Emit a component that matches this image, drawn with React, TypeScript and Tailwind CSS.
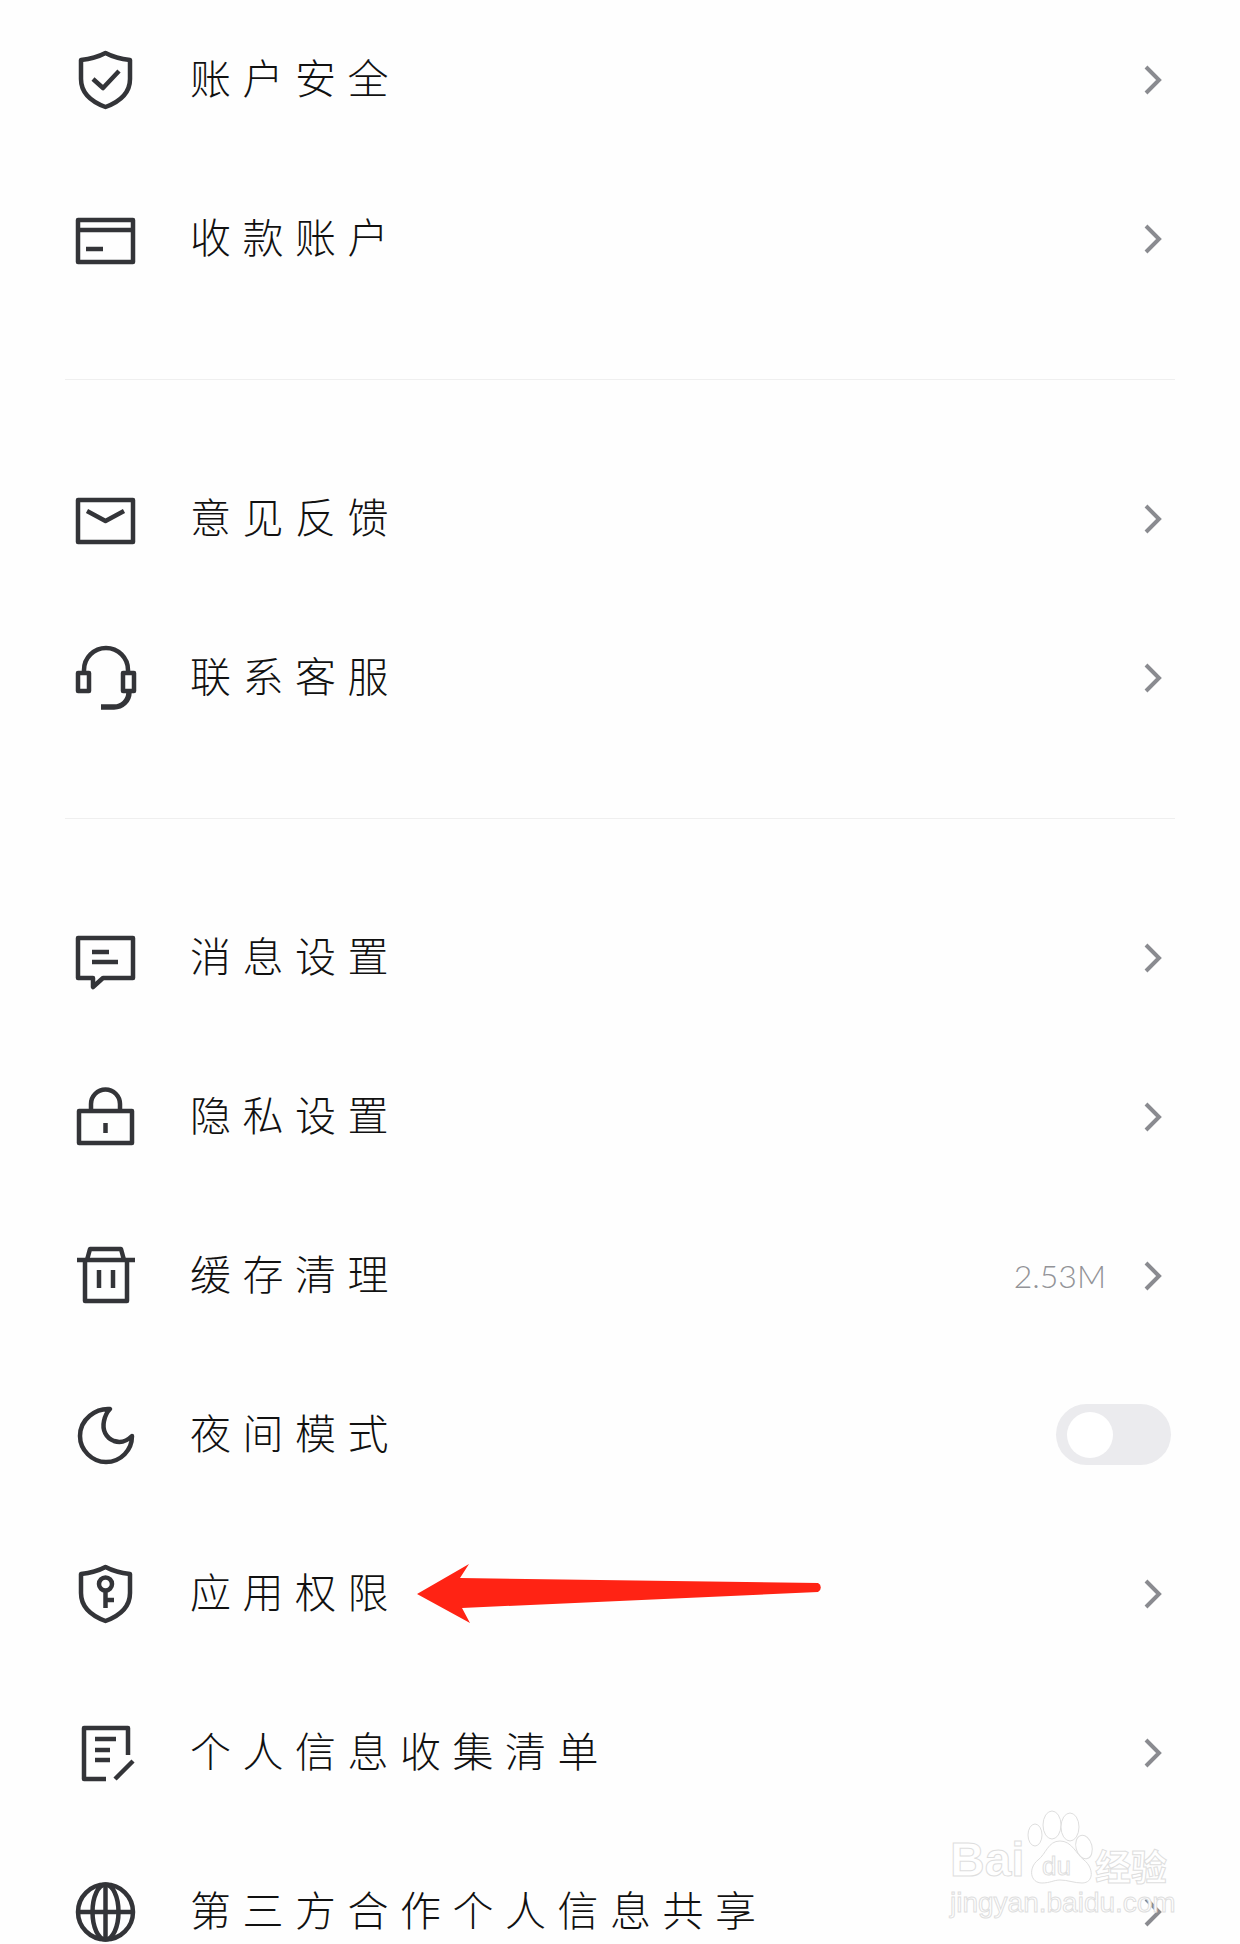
import React from "react";

const iconClass =
  "w-[60px] h-[60px] shrink-0 overflow-visible fill-none stroke-[#333438] stroke-[4.5] [stroke-linejoin:round]";

const Icon = ({ children }: { children: React.ReactNode }) => (
  <svg viewBox="0 0 60 60" className={iconClass}>
    {children}
  </svg>
);

const shield =
  "M29.5 3 C37 7 45 9 54 10 V29 C54 43 43 52 29.5 57 C16 52 5 43 5 29 V10 C14 9 22 7 29.5 3 Z";

const ShieldCheck = () => (
  <Icon>
    <path d={shield} />
    <path d="M17 29 L27 38 L43 21" />
  </Icon>
);
const Card = () => (
  <Icon>
    <rect x="2" y="11" width="55" height="42" />
    <path d="M2 21 H57" />
    <path d="M10 40 H27" />
  </Icon>
);
const Mail = () => (
  <Icon>
    <rect x="2" y="11" width="55" height="42" />
    <path d="M11 22 L29.5 32 L48 22" />
  </Icon>
);
const Headset = () => (
  <Icon>
    <path d="M8 23 V22 A21.5 21.5 0 0 1 52 22 V23" />
    <rect x="2" y="25" width="11" height="18" />
    <rect x="47" y="25" width="11" height="18" />
    <path d="M53 44 C53 53 46 59 38 59 H25" strokeWidth="5.5" />
  </Icon>
);
const Message = () => (
  <Icon>
    <path d="M2 10 H57 V50 H27 L17 59 V50 H2 Z" />
    <path d="M16 24 H33" />
    <path d="M16 34 H42" />
  </Icon>
);
const Lock = () => (
  <Icon>
    <rect x="3" y="24" width="53" height="32" />
    <path d="M15 24 V17 A14.5 14.5 0 0 1 44 17 V24" />
    <path d="M29.5 36 V46" />
  </Icon>
);
const Trash = () => (
  <Icon>
    <path d="M1 14 H59" />
    <path d="M11 14 L14 3 H45 L48 14" />
    <path d="M9 14 V55 H51 V14" />
    <path d="M23 24 V42" />
    <path d="M37 24 V42" />
  </Icon>
);
const Moon = () => (
  <Icon>
    <path d="M34 4 C20 3 4 14 4 31 C4 45 16 57 30 57 C45 57 56 45 56 31 C50 37 44 38 38 36 C30 33 26 25 28 16 C29 11 31 7 34 4 Z" />
  </Icon>
);
const ShieldKey = () => (
  <Icon>
    <path d={shield} />
    <circle cx="29.5" cy="20" r="6.5" />
    <path d="M29.5 26 V44" />
    <path d="M29.5 36 H38" />
  </Icon>
);
const Doc = () => (
  <Icon>
    <path d="M52 32 V5 H8 V56 H30" />
    <path d="M19 16 H40" />
    <path d="M19 27 H34" />
    <path d="M19 37 H34" />
    <path d="M39 56 L57 38" />
  </Icon>
);
const Globe = () => (
  <Icon>
    <circle cx="29.5" cy="30" r="27.5" />
    <ellipse cx="29.5" cy="30" rx="13" ry="27.5" />
    <path d="M29.5 3 V57" />
    <path d="M2 30 H57" />
  </Icon>
);

const Chevron = () => (
  <svg
    viewBox="0 0 16 28"
    className="w-4 h-7 shrink-0 overflow-visible fill-none stroke-[#8a8b90] stroke-[4]"
  >
    <path d="M1 1 L14 14 L1 27" />
  </svg>
);

const Toggle = () => (
  <div className="flex items-center w-[115px] h-[61px] -mr-2.5 pl-[11px] rounded-full bg-[#ebebee]">
    <div className="w-[46px] h-[46px] rounded-full bg-white" />
  </div>
);

type Item = {
  icon: React.ReactNode;
  label: string;
  value?: string;
  toggle?: boolean;
};

const Row = ({ icon, label, value, toggle }: Item) => (
  <div className="flex items-center h-[159px] pl-[76px] pr-[79px]">
    {icon}
    <span className="ml-[54px] pb-[5px] text-[41px] font-light tracking-[11.5px] text-[#111111] font-['Noto_Sans_CJK_SC',sans-serif]">
      {label}
    </span>
    <div className="ml-auto flex items-center">
      {value && (
        <span className="mr-[39px] text-[32px] font-light text-[#929397] font-['Lato',sans-serif]">
          {value}
        </span>
      )}
      {toggle ? <Toggle /> : <Chevron />}
    </div>
  </div>
);

const Divider = () => <div className="mx-[65px] mt-[61px] mb-[59px] h-px bg-[#efefef]" />;

const Watermark = () => (
  <div className="absolute left-[950px] top-[1808px] w-[226px] h-[112px] text-white [-webkit-text-stroke:1px_#dedede] font-['Liberation_Sans',sans-serif] font-bold">
    <svg viewBox="0 0 226 112" className="absolute inset-0 w-full h-full fill-white stroke-[#dedede]">
      <ellipse cx="85" cy="27" rx="7" ry="11" />
      <ellipse cx="102" cy="17" rx="9" ry="14" />
      <ellipse cx="120" cy="19" rx="9" ry="14" />
      <ellipse cx="134" cy="39" rx="8" ry="12" transform="rotate(-15 134 39)" />
      <path d="M110 33 C98 33 96 46 88 52 C78 60 80 75 92 75 C100 75 104 72 110 72 C118 72 124 75 132 75 C144 75 144 60 134 52 C126 46 122 33 110 33 Z" />
    </svg>
    <span className="absolute left-0 top-[24px] text-[48px] leading-[56px]">Bai</span>
    <span className="absolute left-[92px] top-[44px] text-[26px] leading-[28px] font-normal">du</span>
    <span className="absolute left-[145px] top-[35px] text-[36px] leading-[44px] font-['Noto_Sans_CJK_SC',sans-serif]">
      经验
    </span>
    <span className="absolute left-0 top-[79px] text-[28px] leading-[32px] font-normal whitespace-nowrap">
      jingyan.baidu.com
    </span>
  </div>
);

export default function App() {
  return (
    <div className="relative w-[1240px] h-[1944px] overflow-hidden bg-[#fefefe]">
      <Row icon={<ShieldCheck />} label="账户安全" />
      <Row icon={<Card />} label="收款账户" />
      <Divider />
      <Row icon={<Mail />} label="意见反馈" />
      <Row icon={<Headset />} label="联系客服" />
      <Divider />
      <Row icon={<Message />} label="消息设置" />
      <Row icon={<Lock />} label="隐私设置" />
      <Row icon={<Trash />} label="缓存清理" value="2.53M" />
      <Row icon={<Moon />} label="夜间模式" toggle />
      <Row icon={<ShieldKey />} label="应用权限" />
      <Row icon={<Doc />} label="个人信息收集清单" />
      <Row icon={<Globe />} label="第三方合作个人信息共享" />

      <Watermark />

      {/* annotation arrow over the row */}
      <svg
        viewBox="0 0 410 62"
        className="absolute left-[416px] top-[1563px] w-[410px] h-[62px] fill-[#ff2314]"
      >
        <path d="M1 31 L53 1 L44 15 L402 20 A5 5 0 0 1 402 29 L46 45 L54 60 Z" />
      </svg>
    </div>
  );
}
